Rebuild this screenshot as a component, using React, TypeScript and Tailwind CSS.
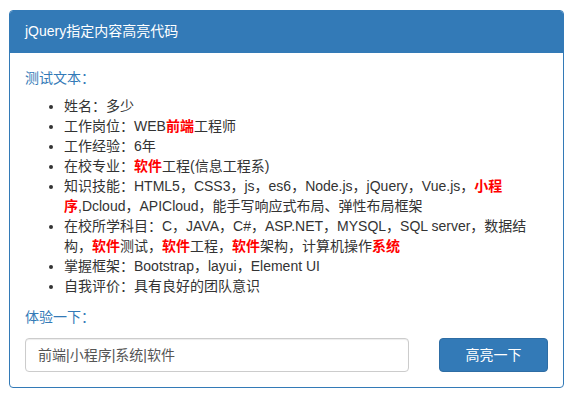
import React from "react";

const R = ({ children }: { children: React.ReactNode }) => (
  <span className="font-bold text-[#ff0000]">{children}</span>
);

export default function App() {
  return (
    <div
      className="w-[574px] h-[397px] bg-white pt-[10px] pl-[9px] text-[14px] leading-[20px] text-[#333333]"
      style={{ fontFamily: '"Liberation Sans", Arial, "Noto Sans CJK SC", sans-serif' }}
    >
      <div className="w-[555px] rounded-[4px] border border-[#337ab7] bg-white">
        <div className="h-[42px] bg-[#337ab7] border-b border-[#337ab7] px-[15px] py-[10px] text-white rounded-t-[3px]">
          jQuery指定内容高亮代码
        </div>
        <div className="p-[15px]">
          <div className="text-[#337ab7] mb-[8px]">测试文本：</div>
          <ul className="list-disc pl-[39px] mb-[11px]">
            <li>姓名：多少</li>
            <li>
              工作岗位：WEB<R>前端</R>工程师
            </li>
            <li>工作经验：6年</li>
            <li>
              在校专业：<R>软件</R>工程(信息工程系)
            </li>
            <li>
              知识技能：HTML5，CSS3，js，es6，Node.js，jQuery，Vue.js，<R>小程</R>
              <br />
              <R>序</R>,Dcloud，APICloud，能手写响应式布局、弹性布局框架
            </li>
            <li>
              在校所学科目：C，JAVA，C#，ASP.NET，MYSQL，SQL server，数据结
              <br />
              构，<R>软件</R>测试，<R>软件</R>工程，<R>软件</R>架构，计算机操作<R>系统</R>
            </li>
            <li>掌握框架：Bootstrap，layui，Element UI</li>
            <li>自我评价：具有良好的团队意识</li>
          </ul>
          <div className="text-[#337ab7] mb-[11px]">体验一下：</div>
          <div className="flex justify-between">
            <div className="w-[384px] h-[34px] rounded-[4px] border border-[#cccccc] px-[12px] py-[6px] text-[#555555] shadow-[inset_0_1px_1px_rgba(0,0,0,0.075)]">
              前端|小程序|系统|软件
            </div>
            <button className="w-[109px] h-[34px] rounded-[4px] border border-[#2e6da4] bg-[#337ab7] text-white">
              高亮一下
            </button>
          </div>
        </div>
      </div>
    </div>
  );
}
